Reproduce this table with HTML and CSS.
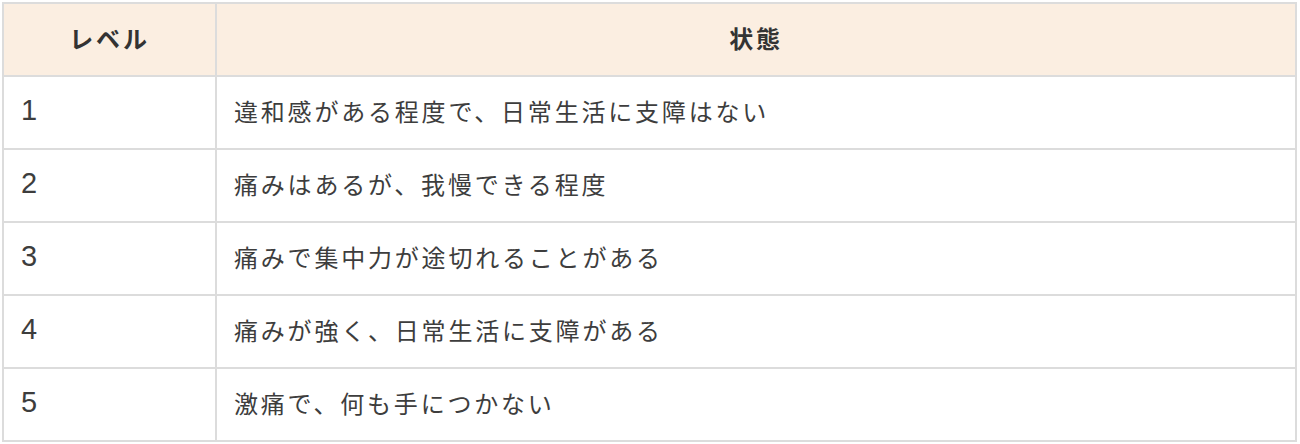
FILE: index.html
```html
<!DOCTYPE html>
<html lang="ja">
<head>
<meta charset="utf-8">
<link rel="stylesheet" href="styles.css">
</head>
<body>
<div class="wrap">
<table class="levels">
  <thead>
    <tr><th class="col-level">レベル</th><th>状態</th></tr>
  </thead>
  <tbody>
    <tr><td>1</td><td>違和感がある程度で、日常生活に支障はない</td></tr>
    <tr><td>2</td><td>痛みはあるが、我慢できる程度</td></tr>
    <tr><td>3</td><td>痛みで集中力が途切れることがある</td></tr>
    <tr><td>4</td><td>痛みが強く、日常生活に支障がある</td></tr>
    <tr><td>5</td><td>激痛で、何も手につかない</td></tr>
  </tbody>
</table>
</div>
</body>
</html>
```
FILE: styles.css
```css
html, body {
  margin: 0;
  padding: 0;
  background: #fff;
}
.wrap {
  padding: 2px 3px 0 2px;
}
.levels {
  width: 100%;
  border-collapse: collapse;
  border: 2px solid #dcdcdc;
  font-family: "Noto Sans CJK JP", "Noto Sans", sans-serif;
  color: #3d3d3d;
}
.levels th,
.levels td {
  border: 2px solid #dcdcdc;
  height: 73px;
  box-sizing: border-box;
  padding: 0 17px 4px;
  font-size: 24px;
  letter-spacing: 2.8px;
  text-align: left;
}
.levels th {
  background: #fbeee1;
  color: #333;
  font-weight: 700;
  text-align: center;
}
.levels .col-level {
  width: 213px;
}
.levels td:first-child {
  font-family: "Liberation Sans", Arial, sans-serif;
  font-size: 29px;
  letter-spacing: 0;
}
```
